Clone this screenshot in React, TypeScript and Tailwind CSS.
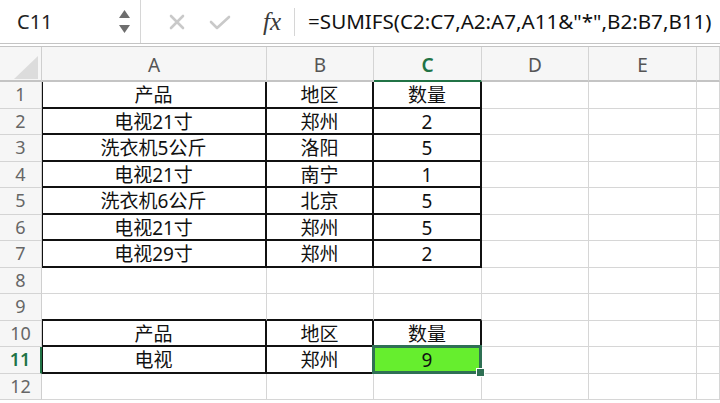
import React from 'react';

const colWidths = ['w-[225px]', 'w-[107px]', 'w-[108px]', 'w-[107px]', 'w-[108px]', 'flex-1'];
const colLetters = ['A', 'B', 'C', 'D', 'E', ''];

const rows: string[][] = [
  ['产品', '地区', '数量'],
  ['电视21寸', '郑州', '2'],
  ['洗衣机5公斤', '洛阳', '5'],
  ['电视21寸', '南宁', '1'],
  ['洗衣机6公斤', '北京', '5'],
  ['电视21寸', '郑州', '5'],
  ['电视29寸', '郑州', '2'],
  [],
  [],
  ['产品', '地区', '数量'],
  ['电视', '郑州', '9'],
  [],
];

const font = { fontFamily: '"Noto Sans", "Noto Sans CJK SC", sans-serif' };

const FormulaBar = () => (
  <div className="flex h-[43px] items-center bg-white" style={font}>
    <div className="flex h-full w-[141px] items-center justify-between border-r border-[#d6d6d6] pl-[17px] pr-[10px]">
      <span className="text-[20px] text-[#222]">C11</span>
      <div className="flex flex-col items-center gap-[7px]">
        <svg width="11" height="8" viewBox="0 0 11 8"><path d="M5.5 0 L11 8 L0 8 Z" fill="#6e6e6e" /></svg>
        <svg width="11" height="8" viewBox="0 0 11 8"><path d="M0 0 L11 0 L5.5 8 Z" fill="#6e6e6e" /></svg>
      </div>
    </div>
    <div className="ml-[28px] flex items-center">
      <svg width="16" height="16" viewBox="0 0 16 16">
        <path d="M2 2 L14 14 M14 2 L2 14" stroke="#c9c9c9" strokeWidth="2.6" strokeLinecap="round" />
      </svg>
    </div>
    <div className="ml-[24px] flex items-center">
      <svg width="22" height="16" viewBox="0 0 22 16">
        <path d="M2 8 L8 14 L20 3" stroke="#c9c9c9" strokeWidth="2.6" fill="none" strokeLinecap="round" strokeLinejoin="round" />
      </svg>
    </div>
    <span
      className="ml-[32px] text-[25px] italic text-[#3a3a3a]"
      style={{ fontFamily: '"Liberation Serif", "DejaVu Serif", serif' }}
    >
      fx
    </span>
    <div className="ml-[13px] h-[28px] w-px bg-[#d6d6d6]" />
    <span className="ml-[13px] whitespace-nowrap text-[20.6px] text-[#111]">
      =SUMIFS(C2:C7,A2:A7,A11&amp;"*",B2:B7,B11)
    </span>
  </div>
);

const Header = () => (
  <div className="flex h-[35px] bg-[#f6f6f6]" style={font}>
    <div className="relative w-[42px] border-r border-b-2 border-r-[#cfcfcf] border-b-[#c4c4c4]">
      <svg className="absolute left-[14px] top-[9px]" width="24" height="23" viewBox="0 0 24 23">
        <path d="M24 0 L24 23 L0 23 Z" fill="#dcdcdc" />
      </svg>
    </div>
    {colLetters.map((l, i) => (
      <div
        key={i}
        className={`${colWidths[i]} flex items-center justify-center border-r border-b-2 border-r-[#d4d4d4] pt-[3px] text-[19px] ${
          i === 2 ? 'border-b-[#217346] font-semibold text-[#217346]' : 'border-b-[#c4c4c4] text-[#555]'
        }`}
      >
        {l}
      </div>
    ))}
  </div>
);

const Row = ({ r, data }: { r: number; data: string[] }) => {
  const selectedRow = r === 11;
  return (
    <div className="flex h-[26.5px]" style={font}>
      <div
        className={`flex w-[42px] items-center justify-center border-b border-b-[#d4d4d4] bg-[#f6f6f6] text-[18px] ${
          selectedRow
            ? 'border-r-2 border-r-[#217346] font-semibold text-[#217346]'
            : 'border-r border-r-[#cfcfcf] text-[#666]'
        }`}
      >
        {r}
      </div>
      {colWidths.map((w, c) => {
        const inTable = ((r >= 1 && r <= 7) || r === 10 || r === 11) && c <= 2;
        const topOfTable = r === 9 && c <= 2;
        const selected = r === 11 && c === 2;
        return (
          <div
            key={c}
            className={`${w} relative flex items-center justify-center pt-[2px] text-[19px] text-[#111] ${
              inTable ? 'border-r-2 border-r-[#111]' : 'border-r border-r-[#d6d6d6]'
            } ${inTable || topOfTable ? 'border-b-2 border-b-[#111]' : 'border-b border-b-[#d6d6d6]'} ${
              inTable && c === 0 ? 'shadow-[inset_1px_0_0_#111]' : ''
            } ${selected ? 'z-10 bg-[#66ee2e] text-[#1d4f1d]' : 'bg-white'}`}
          >
            {data[c] ?? ''}
            {selected && (
              <>
                <div className="absolute -left-[2px] -top-[2px] -right-[2px] -bottom-[2px] border-[3px] border-[#2f7054]" />
                <div className="absolute -bottom-[5px] -right-[5px] h-[9px] w-[9px] border border-white bg-[#2f7054]" />
              </>
            )}
          </div>
        );
      })}
    </div>
  );
};

export default function App() {
  return (
    <div className="h-[403px] w-[720px] overflow-hidden bg-white">
      <FormulaBar />
      <div className="h-[4px] border-y border-[#c4c4c4] bg-white" />
      <Header />
      {rows.map((d, i) => (
        <Row key={i} r={i + 1} data={d} />
      ))}
    </div>
  );
}
